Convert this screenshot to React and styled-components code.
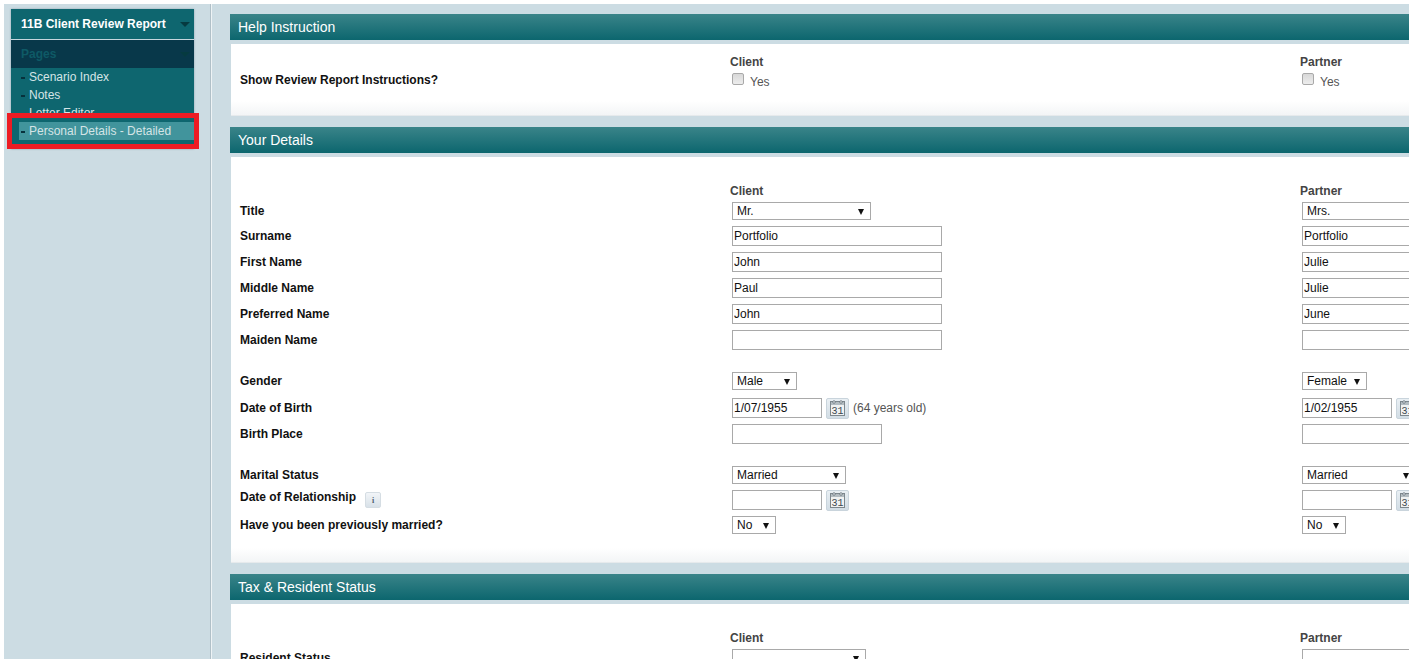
import React from 'react';
import styled, { createGlobalStyle } from 'styled-components';

const GlobalStyle = createGlobalStyle`
    html, body {
        margin: 0;
        height: 100%;
        background: #fff;
        overflow: hidden;
    }
    body {
        font-family: "Liberation Sans", Arial, sans-serif;
        font-size: 12px;
    }
`;

// styled components
const Page = styled.div`
    display: flex;
    width: 1405px;
    height: 655px;
    margin: 4px 0 0 4px;
    background: #ccdce3;
    overflow: hidden;
`;
const Sidebar = styled.aside`
    position: relative;
    flex: none;
    width: 207px;
    padding: 5px 0 0 7px;
    box-sizing: border-box;
    border-right: 1px solid #b0c0c8;
    box-shadow: 1px 0 0 #eef3f5;
`;
const Menu = styled.nav`
    width: 183px;
    height: 140px;
    background: #0e666f;
    box-shadow: 0 0 2px #8fa3ad;
    overflow: hidden;
`;
const MenuTitle = styled.div`
    display: flex;
    align-items: center;
    justify-content: space-between;
    height: 30px;
    padding: 0 4px 0 10px;
    border-bottom: 1px solid #c5d6dd;
    color: #fff;
    font-weight: bold;
    font-size: 12px;
`;
const PagesBar = styled.div`
    display: flex;
    align-items: center;
    justify-content: space-between;
    height: 28px;
    padding: 0 4px 0 10px;
    background: #08384a;
    color: #0e5a66;
    font-weight: bold;
    font-size: 12px;
`;
const Caret = styled.span`
    width: 0;
    height: 0;
    border-left: 5px solid transparent;
    border-right: 5px solid transparent;
    border-top: 5px solid #063a40;
`;
const MenuList = styled.ul`
    list-style: none;
    margin: 0;
    padding: 0;
    height: ${p => p.$height || 'auto'};
    overflow: hidden;
`;
const MenuItem = styled.li`
    display: flex;
    align-items: center;
    height: 18px;
    padding-left: 10px;
    color: #d5e4e6;
    white-space: nowrap;
    &::before {
        content: '';
        width: 4px;
        height: 2px;
        margin: 2px 4px 0 0;
        background: #07313c;
    }
`;
const ActiveItem = styled(MenuItem)`
    margin-left: 8px;
    padding-left: 2px;
    background: #41949c;
`;
const Highlight = styled.div`
    position: absolute;
    left: 3px;
    top: 109px;
    width: 182px;
    height: 26px;
    border: 5px solid #ed1c24;
`;
const Main = styled.main`
    flex: 1;
    min-width: 0;
    padding: 10px 0 0 19px;
`;
const Section = styled.section`
    margin-bottom: 11px;
`;
const SectionHeader = styled.h2`
    margin: 0 0 4px;
    height: 26px;
    padding-left: 8px;
    line-height: 26px;
    background: linear-gradient(#3a8489, #0c666e);
    color: #fff;
    font-size: 14px;
    font-weight: normal;
`;
const SectionBody = styled.div`
    display: grid;
    row-gap: 6px;
    align-content: start;
    height: ${p => p.$height}px;
    box-sizing: border-box;
    margin-left: 1px;
    padding-top: ${p => p.$top}px;
    background: linear-gradient(#fff calc(100% - 14px), #f3f5f6);
    border-bottom: 1px solid #e6eaec;
`;
const Row = styled.div`
    display: grid;
    grid-template-columns: 501px 570px 200px;
    align-items: center;
    margin-top: ${p => p.$gap || 0}px;
    height: ${p => p.$height || 20}px;
`;
const Label = styled.div`
    display: flex;
    align-self: ${p => p.$raised ? 'start' : 'center'};
    align-items: flex-start;
    padding-left: 9px;
    color: #111;
    font-weight: bold;
    font-size: 12px;
`;
const Cell = styled.div`
    display: flex;
    align-items: center;
    height: 20px;
    white-space: nowrap;
`;
const ColumnTitle = styled.div`
    margin-left: -2px;
    color: #444;
    font-weight: bold;
    font-size: 12px;
`;
const CheckCell = styled.label`
    display: flex;
    align-items: flex-start;
    gap: 6px;
    height: 14px;
    color: #555;
`;
const CheckText = styled.span`
    margin-top: 2px;
`;
const Check = styled.input`
    appearance: none;
    flex: none;
    margin: 0;
    width: 12px;
    height: 12px;
    border: 1px solid #a9a9a9;
    border-radius: 2px;
    background: linear-gradient(#d8d8d8, #ededed);
`;
const TextBox = styled.input`
    box-sizing: border-box;
    width: ${p => p.$width}px;
    height: 20px;
    margin: 0;
    padding: 0 0 0 1px;
    border: 1px solid #a9a9a9;
    background: #fff;
    color: #111;
    font: 12px "Liberation Sans", Arial, sans-serif;
    outline: none;
`;
const SelectWrap = styled.div`
    position: relative;
    width: ${p => p.$width}px;
    height: 18px;
`;
const SelectBox = styled.select`
    appearance: none;
    box-sizing: border-box;
    width: 100%;
    height: 100%;
    margin: 0;
    padding: 0 0 0 4px;
    border: 1px solid #a9a9a9;
    border-radius: 0;
    background: #fff;
    color: #111;
    font: 12px "Liberation Sans", Arial, sans-serif;
`;
const SelectArrow = styled.span`
    position: absolute;
    right: 7px;
    top: 7px;
    width: 0;
    height: 0;
    border-left: 3.5px solid transparent;
    border-right: 3.5px solid transparent;
    border-top: 6px solid #111;
`;
const CalButton = styled.button`
    display: flex;
    align-items: center;
    justify-content: center;
    flex: none;
    width: 23px;
    height: 21px;
    margin-left: 4px;
    padding: 0;
    border: 1px solid #c9d4dc;
    border-radius: 2px;
    background: linear-gradient(#e9eff3, #d2dde5);
`;
const Age = styled.span`
    margin-left: 4px;
    color: #555;
`;
const InfoButton = styled.span`
    display: inline-flex;
    align-items: center;
    justify-content: center;
    box-sizing: border-box;
    width: 16px;
    height: 16px;
    margin: 2px 0 0 9px;
    border: 1px solid #d5dde3;
    border-radius: 2px;
    background: linear-gradient(#f2f5f8, #d8e1e8);
    color: #4c6070;
    font: bold 8px "Liberation Serif", serif;
`;

const CalendarIcon = () => (
    <svg width="15" height="16" viewBox="0 0 15 16">
        <rect x="0.5" y="1.5" width="14" height="14" fill="#f0f2f2" stroke="#7d878d" />
        <rect x="1" y="2" width="13" height="3" fill="#b3bcc1" />
        <circle cx="4" cy="2" r="1.3" fill="#e4e8ea" stroke="#59666e" strokeWidth="0.7" />
        <circle cx="11" cy="2" r="1.3" fill="#e4e8ea" stroke="#59666e" strokeWidth="0.7" />
        <text x="7.5" y="14" textAnchor="middle" fontFamily="Liberation Mono, monospace" fontSize="10" fill="#3c474e">31</text>
    </svg>
);

const Select = ({ value, width }) => (
    <SelectWrap $width={width}>
        <SelectBox defaultValue={value} tabIndex={-1}>
            <option>{value}</option>
        </SelectBox>
        <SelectArrow />
    </SelectWrap>
);

const DateField = ({ value, age }) => (
    <Cell>
        <TextBox $width={90} defaultValue={value} readOnly />
        <CalButton tabIndex={-1}><CalendarIcon /></CalButton>
        {age && <Age>{age}</Age>}
    </Cell>
);

const Titles = () => (
    <Row $height={14}>
        <div />
        <ColumnTitle>Client</ColumnTitle>
        <ColumnTitle>Partner</ColumnTitle>
    </Row>
);

const YesCheck = () => (
    <CheckCell>
        <Check type="checkbox" tabIndex={-1} />
        <CheckText>Yes</CheckText>
    </CheckCell>
);

// data
const nameRows = [
    ['Surname', 'Portfolio', 'Portfolio'],
    ['First Name', 'John', 'Julie'],
    ['Middle Name', 'Paul', 'Julie'],
    ['Preferred Name', 'John', 'June'],
    ['Maiden Name', '', ''],
];

const App = () => (
    <>
        <GlobalStyle />
        <Page>
            <Sidebar>
                <Menu>
                    <MenuTitle>11B Client Review Report<Caret /></MenuTitle>
                    <PagesBar>Pages<Caret /></PagesBar>
                    <MenuList $height="54px">
                        <MenuItem>Scenario Index</MenuItem>
                        <MenuItem>Notes</MenuItem>
                        <MenuItem>Letter Editor</MenuItem>
                    </MenuList>
                    <MenuList>
                        <ActiveItem>Personal Details - Detailed</ActiveItem>
                    </MenuList>
                </Menu>
                <Highlight />
            </Sidebar>
            <Main>
                <Section>
                    <SectionHeader>Help Instruction</SectionHeader>
                    <SectionBody $height={72} $top={11}>
                        <Titles />
                        <Row $height={14} $gap={-2}>
                            <Label>Show Review Report Instructions?</Label>
                            <YesCheck />
                            <YesCheck />
                        </Row>
                    </SectionBody>
                </Section>
                <Section>
                    <SectionHeader>Your Details</SectionHeader>
                    <SectionBody $height={406} $top={27}>
                        <Titles />
                        <Row $height={18} $gap={-2}>
                            <Label>Title</Label>
                            <Select value="Mr." width={139} />
                            <Select value="Mrs." width={139} />
                        </Row>
                        {nameRows.map(([label, client, partner]) => (
                            <Row key={label}>
                                <Label>{label}</Label>
                                <Cell><TextBox $width={210} defaultValue={client} readOnly /></Cell>
                                <Cell><TextBox $width={210} defaultValue={partner} readOnly /></Cell>
                            </Row>
                        ))}
                        <Row $height={18} $gap={16}>
                            <Label>Gender</Label>
                            <Select value="Male" width={65} />
                            <Select value="Female" width={65} />
                        </Row>
                        <Row $gap={2}>
                            <Label>Date of Birth</Label>
                            <DateField value="1/07/1955" age="(64 years old)" />
                            <DateField value="1/02/1955" />
                        </Row>
                        <Row>
                            <Label>Birth Place</Label>
                            <Cell><TextBox $width={150} readOnly /></Cell>
                            <Cell><TextBox $width={150} readOnly /></Cell>
                        </Row>
                        <Row $height={18} $gap={16}>
                            <Label>Marital Status</Label>
                            <Select value="Married" width={114} />
                            <Select value="Married" width={114} />
                        </Row>
                        <Row>
                            <Label $raised>Date of Relationship<InfoButton>i</InfoButton></Label>
                            <DateField />
                            <DateField />
                        </Row>
                        <Row $height={18}>
                            <Label>Have you been previously married?</Label>
                            <Select value="No" width={44} />
                            <Select value="No" width={44} />
                        </Row>
                    </SectionBody>
                </Section>
                <Section>
                    <SectionHeader>Tax &amp; Resident Status</SectionHeader>
                    <SectionBody $height={120} $top={27}>
                        <Titles />
                        <Row $height={18} $gap={-2}>
                            <Label>Resident Status</Label>
                            <Select value="" width={134} />
                            <Select value="" width={134} />
                        </Row>
                    </SectionBody>
                </Section>
            </Main>
        </Page>
    </>
);

export default App;
